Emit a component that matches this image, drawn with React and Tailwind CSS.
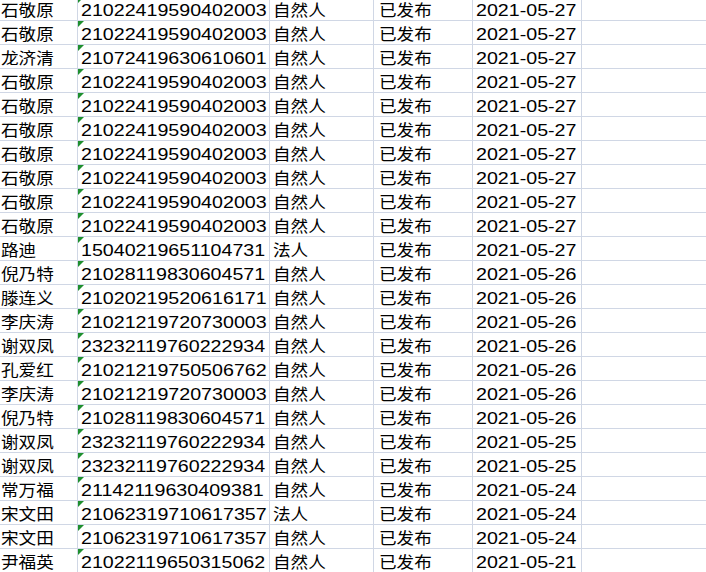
import React from "react";

const rows = [
  ["石敬原", "21022419590402003", "自然人", "已发布", "2021-05-27"],
  ["石敬原", "21022419590402003", "自然人", "已发布", "2021-05-27"],
  ["龙济清", "21072419630610601", "自然人", "已发布", "2021-05-27"],
  ["石敬原", "21022419590402003", "自然人", "已发布", "2021-05-27"],
  ["石敬原", "21022419590402003", "自然人", "已发布", "2021-05-27"],
  ["石敬原", "21022419590402003", "自然人", "已发布", "2021-05-27"],
  ["石敬原", "21022419590402003", "自然人", "已发布", "2021-05-27"],
  ["石敬原", "21022419590402003", "自然人", "已发布", "2021-05-27"],
  ["石敬原", "21022419590402003", "自然人", "已发布", "2021-05-27"],
  ["石敬原", "21022419590402003", "自然人", "已发布", "2021-05-27"],
  ["路迪", "15040219651104731", "法人", "已发布", "2021-05-27"],
  ["倪乃特", "21028119830604571", "自然人", "已发布", "2021-05-26"],
  ["滕连义", "21020219520616171", "自然人", "已发布", "2021-05-26"],
  ["李庆涛", "21021219720730003", "自然人", "已发布", "2021-05-26"],
  ["谢双凤", "23232119760222934", "自然人", "已发布", "2021-05-26"],
  ["孔爱红", "21021219750506762", "自然人", "已发布", "2021-05-26"],
  ["李庆涛", "21021219720730003", "自然人", "已发布", "2021-05-26"],
  ["倪乃特", "21028119830604571", "自然人", "已发布", "2021-05-26"],
  ["谢双凤", "23232119760222934", "自然人", "已发布", "2021-05-25"],
  ["谢双凤", "23232119760222934", "自然人", "已发布", "2021-05-25"],
  ["常万福", "21142119630409381", "自然人", "已发布", "2021-05-24"],
  ["宋文田", "21062319710617357", "法人", "已发布", "2021-05-24"],
  ["宋文田", "21062319710617357", "自然人", "已发布", "2021-05-24"],
  ["尹福英", "21022119650315062", "自然人", "已发布", "2021-05-21"],
];

const cell =
  "h-[23px] shrink-0 border-r border-[#d0d7e5] overflow-hidden whitespace-nowrap pt-[4px] leading-[19px] text-[17px]";
const cjk = "inline-block origin-left scale-x-[1.1] text-[16px]";
const num = "inline-block origin-left scale-x-[1.155] text-[17px]";

export default function App() {
  return (
    <div className="w-[706px] h-[572px] overflow-hidden bg-white text-black font-['Liberation_Sans','Noto_Sans_CJK_SC',sans-serif]">
      <div className="flex flex-col mt-[-3px]">
        {rows.map((r, i) => (
          <div key={i} className="flex border-b border-[#d0d7e5]">
            <div className={`${cell} w-[78px] pl-[1px]`}>
              <span className={cjk}>{r[0]}</span>
            </div>
            <div className={`${cell} w-[192px] pl-[3px] relative`}>
              <svg
                className="absolute left-0 top-0"
                width="6"
                height="6"
                viewBox="0 0 6 6"
              >
                <polygon points="0,0 6,0 0,6" fill="#1f8f2f" />
              </svg>
              <span className={num}>{r[1]}</span>
            </div>
            <div className={`${cell} w-[104px] pl-[3px]`}>
              <span className={cjk}>{r[2]}</span>
            </div>
            <div className={`${cell} w-[99px] pl-[5px]`}>
              <span className={cjk}>{r[3]}</span>
            </div>
            <div className={`${cell} w-[109px] pl-[3px]`}>
              <span className={num}>{r[4]}</span>
            </div>
            <div className="h-[23px] flex-1" />
          </div>
        ))}
      </div>
    </div>
  );
}
